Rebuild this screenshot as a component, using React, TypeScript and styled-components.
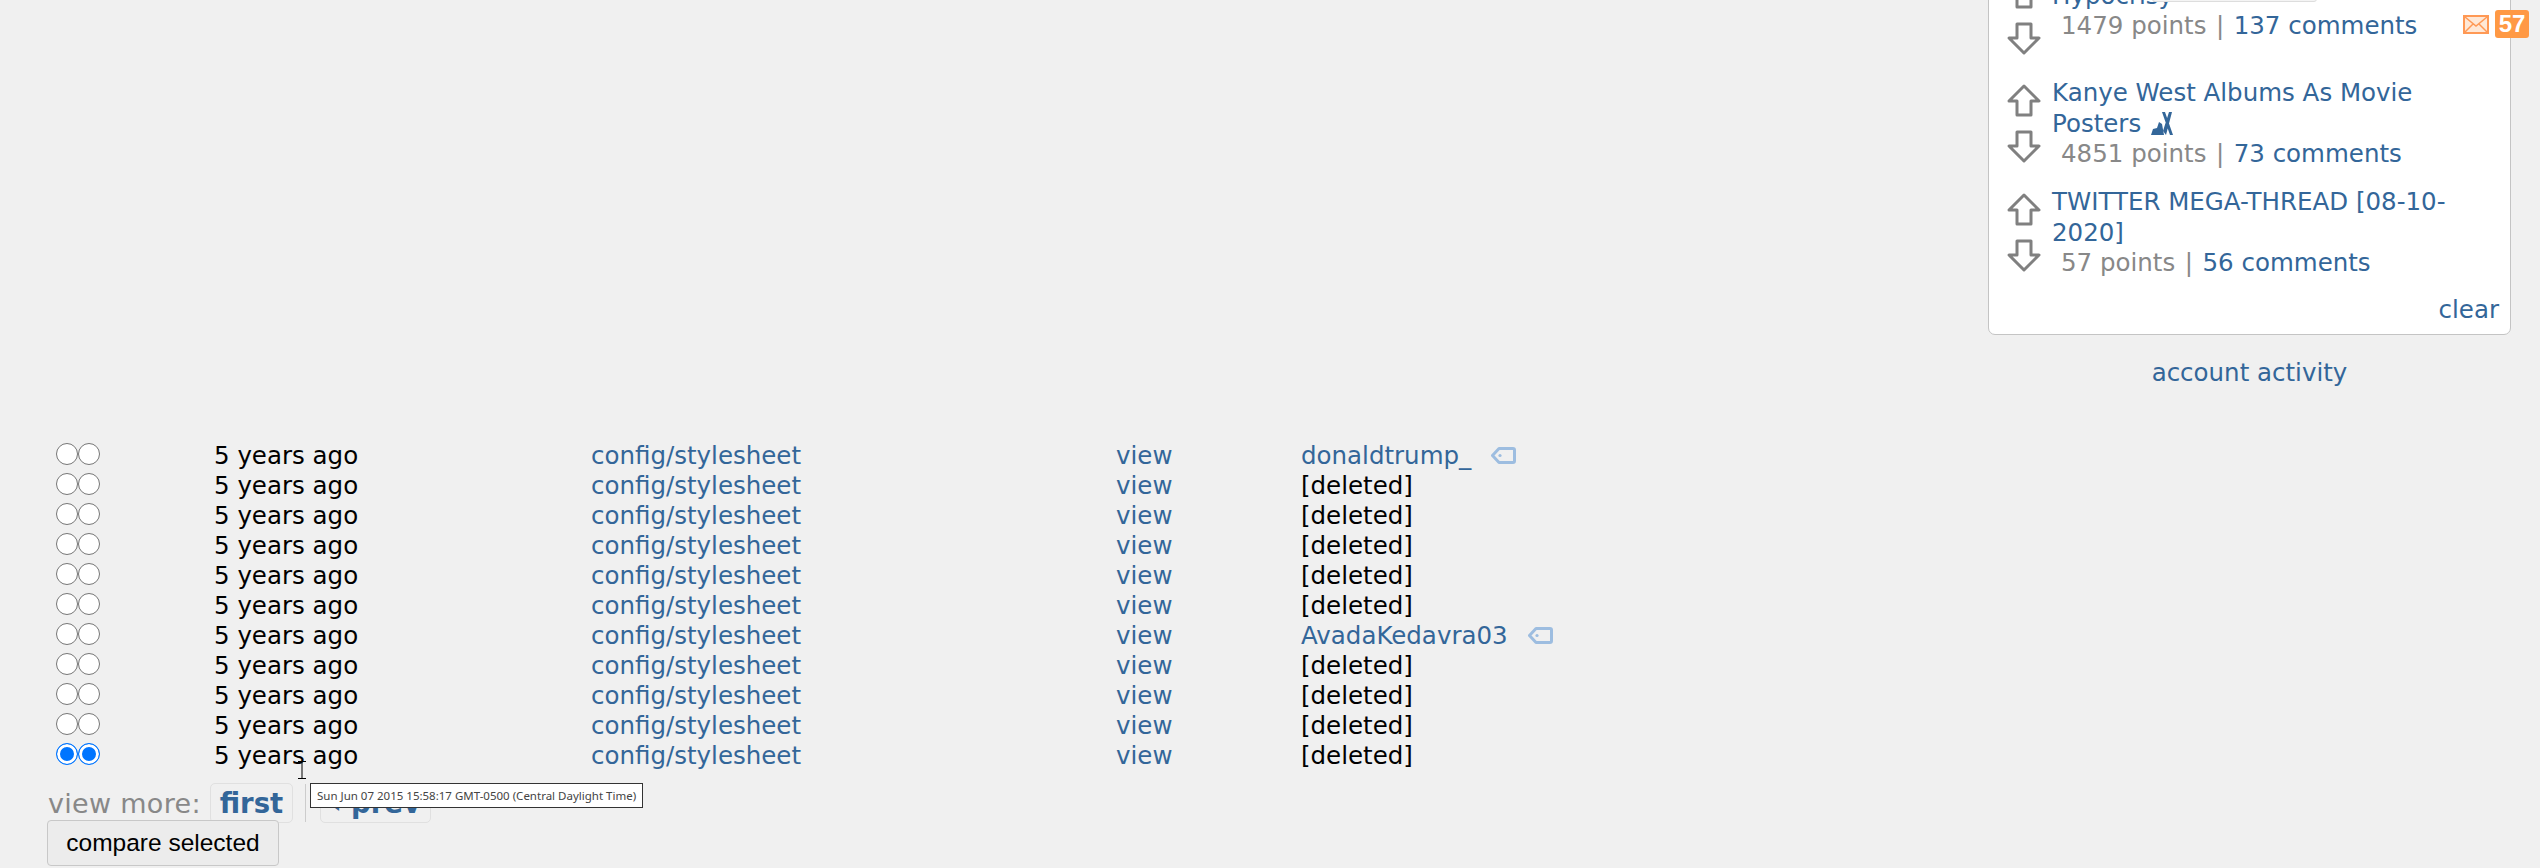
import * as React from 'react'
import styled, { createGlobalStyle } from 'styled-components'

const GlobalStyle = createGlobalStyle`
  html, body {
    margin: 0;
    padding: 0;
    background: #f0f0f0;
  }
  body {
    font-family: 'DejaVu Sans', Verdana, sans-serif;
    color: #000;
  }
`

const Page = styled.div`
  position: relative;
  width: 2540px;
  height: 868px;
  overflow: hidden;
  background: #f0f0f0;
`

const Top = styled.div`
  height: 440px;
  display: flex;
  justify-content: flex-end;
  padding-right: 29px;
  box-sizing: border-box;
`

const Side = styled.aside`
  width: 523px;
  display: flex;
  flex-direction: column;
  align-items: center;
`

const RecentBox = styled.div`
  width: 100%;
  box-sizing: border-box;
  margin-top: -32px;
  padding: 0 11px 0 18px;
  height: 367px;
  background: #fff;
  border: 1px solid #c4c4c4;
  border-radius: 0 0 7px 7px;
  display: flex;
  flex-direction: column;
`

const Item = styled.div<{ $gap: number }>`
  display: flex;
  gap: 11px;
  margin-bottom: ${({ $gap }) => $gap}px;
`

const Arrows = styled.div`
  flex: none;
  width: 34px;
  padding-top: 7px;
  display: flex;
  flex-direction: column;
  gap: 13px;
`

const ItemBody = styled.div<{ $top: number }>`
  flex: 1;
  font-size: 24.5px;
  padding-top: ${({ $top }) => $top}px;
`

const Title = styled.a`
  display: block;
  color: #369;
  line-height: 31px;
`

const Meta = styled.div`
  color: #888;
  line-height: 29px;
  padding-left: 9px;
  white-space: nowrap;
`

const Pipe = styled.span`
  color: #888;
  margin: 0 9.5px;
`

const Link = styled.a`
  color: #369;
  white-space: nowrap;
`

const Clear = styled.a`
  color: #369;
  font-size: 24.5px;
  line-height: 30px;
  margin-top: auto;
  margin-bottom: 9px;
  align-self: flex-end;
`

const Activity = styled.a`
  color: #369;
  font-size: 24.5px;
  margin-top: 23px;
`

const Table = styled.div`
  padding-left: 56px;
  display: flex;
  flex-direction: column;
`

const Row = styled.div`
  height: 30px;
  display: grid;
  grid-template-columns: 158px 377px 525px 185px 1fr;
  align-items: center;
  font-size: 24.5px;
  white-space: nowrap;
`

const Radios = styled.div`
  display: flex;
  margin-bottom: 2px;
`

const Radio = styled.span<{ $on?: boolean }>`
  box-sizing: border-box;
  width: 22px;
  height: 22px;
  border-radius: 50%;
  border: 1.5px solid ${({ $on }) => ($on ? '#0075ff' : '#767676')};
  background: ${({ $on }) => ($on ? '#0075ff' : '#fff')};
  box-shadow: ${({ $on }) => ($on ? 'inset 0 0 0 3px #fff' : 'none')};
`

const Author = styled.span`
  display: flex;
  align-items: center;
  gap: 20px;
`

const Footer = styled.div`
  padding: 13px 0 0 47px;
  display: flex;
  flex-direction: column;
`

const ViewMore = styled.div`
  height: 40px;
  display: flex;
  align-items: center;
  color: #888;
  font-size: 27px;
  letter-spacing: 0.3px;
  padding-left: 1px;
`

const NavButton = styled.a`
  box-sizing: border-box;
  height: 40px;
  display: flex;
  align-items: center;
  padding: 0 9px;
  background: #f0f0f0;
  border: 1px solid #e0e0e0;
  border-radius: 5px;
  color: #369;
  font-weight: bold;
  font-size: 27.5px;
  letter-spacing: 0;
`

const Sep = styled.span`
  width: 1px;
  height: 38px;
  background: #ccc;
  margin: 0 14px 0 12px;
`

const Compare = styled.button`
  box-sizing: border-box;
  width: 232px;
  height: 46px;
  margin-top: -3px;
  background: #ececec;
  border: 1px solid #c8c8c8;
  border-radius: 4px;
  color: #000;
  font-family: 'Liberation Sans', Arial, sans-serif;
  font-size: 24.5px;
  padding: 0;
`

const Tooltip = styled.div`
  position: absolute;
  left: 310px;
  top: 783px;
  height: 25px;
  box-sizing: border-box;
  padding: 0 6px;
  display: flex;
  align-items: center;
  background: #fff;
  border: 1px solid #333;
  font-family: 'Noto Sans', 'Open Sans', sans-serif;
  font-size: 11.5px;
  color: #444;
  white-space: nowrap;
`

const Cursor = styled.svg`
  position: absolute;
  left: 297px;
  top: 761px;
`

const Unread = styled.div`
  position: absolute;
  left: 2463px;
  top: 10px;
  display: flex;
  align-items: center;
  gap: 6px;
`

const Badge = styled.span`
  width: 34px;
  height: 28px;
  border-radius: 3px;
  background: #ff9944;
  color: #fff;
  font-family: 'Liberation Sans', Arial, sans-serif;
  font-weight: bold;
  font-size: 24px;
  display: flex;
  align-items: center;
  justify-content: center;
`

const PopupEdge = styled.div`
  position: absolute;
  left: 2152px;
  top: -10px;
  width: 165px;
  height: 12px;
  box-sizing: border-box;
  background: #f4f4f4;
  border: 1px solid #ddd;
  border-radius: 3px;
`

const FlairIcon = styled.svg`
  vertical-align: -3px;
  margin-left: 9px;
`

const UpArrow = () => (
  <svg width="34" height="33" viewBox="0 0 34 33">
    <path d="M17 2 L32 17 H24 V31 H10 V17 H2 Z" fill="#fff" stroke="#808080" strokeWidth="3" strokeLinejoin="round" />
  </svg>
)

const DownArrow = () => (
  <svg width="34" height="33" viewBox="0 0 34 33">
    <path d="M17 31 L32 16 H24 V2 H10 V16 H2 Z" fill="#fff" stroke="#808080" strokeWidth="3" strokeLinejoin="round" />
  </svg>
)

const TagIcon = () => (
  <svg width="25" height="17" viewBox="0 0 25 17">
    <path d="M8 1.5 H22 Q23.5 1.5 23.5 3 V14 Q23.5 15.5 22 15.5 H8 L1.5 8.5 Z" fill="none" stroke="#9dbde0" strokeWidth="3" strokeLinejoin="round" />
    <circle cx="9" cy="8.5" r="1.6" fill="#9dbde0" />
  </svg>
)

const Flair = () => (
  <FlairIcon width="24" height="24" viewBox="0 0 24 24">
    <path d="M1 24 L3 18 L7 17 L9 11 L12 13 L14 24 Z" fill="#369" />
    <path d="M12 1 L15 1 L23 24 L20 24 Z M19 1 L22 1 L16 24 L13 20 Z" fill="#369" />
  </FlairIcon>
)

const Envelope = () => (
  <svg width="26" height="19" viewBox="0 0 26 19">
    <rect width="26" height="19" fill="#ff9955" />
    <rect x="2" y="2" width="22" height="15" fill="#ffe8d6" />
    <path d="M2 2 L13 11 L24 2 M2 17 L10 9 M24 17 L16 9" fill="none" stroke="#ff9955" strokeWidth="1.5" />
  </svg>
)

const rows = [
  'donaldtrump_',
  '',
  '',
  '',
  '',
  '',
  'AvadaKedavra03',
  '',
  '',
  '',
  ''
]

const recent = [
  { title: 'Hypocrisy', points: 1479, comments: 137, top: 11, gap: 22 },
  { title: 'Kanye West Albums As Movie Posters', points: 4851, comments: 73, flair: true, top: 0, gap: 18 },
  { title: 'TWITTER MEGA-THREAD [08-10-2020]', points: 57, comments: 56, top: 0, gap: 16 }
]

export default function App() {
  return (
    <Page>
      <GlobalStyle />
      <Top>
        <Side>
          <RecentBox>
            {recent.map(r => (
              <Item key={r.title} $gap={r.gap}>
                <Arrows>
                  <UpArrow />
                  <DownArrow />
                </Arrows>
                <ItemBody $top={r.top}>
                  <Title>
                    {r.title}
                    {r.flair && <Flair />}
                  </Title>
                  <Meta>
                    {r.points} points<Pipe>|</Pipe>
                    <Link>{r.comments} comments</Link>
                  </Meta>
                </ItemBody>
              </Item>
            ))}
            <Clear>clear</Clear>
          </RecentBox>
          <Activity>account activity</Activity>
        </Side>
      </Top>
      <Table>
        {rows.map((author, i) => (
          <Row key={i}>
            <Radios>
              <Radio $on={i === rows.length - 1} />
              <Radio $on={i === rows.length - 1} />
            </Radios>
            <span>5 years ago</span>
            <Link>config/stylesheet</Link>
            <Link>view</Link>
            {author ? (
              <Author>
                <Link>{author}</Link>
                <TagIcon />
              </Author>
            ) : (
              <span>[deleted]</span>
            )}
          </Row>
        ))}
      </Table>
      <Footer>
        <ViewMore>
          view more:&nbsp;
          <NavButton>first</NavButton>
          <Sep />
          <NavButton>‹ prev</NavButton>
        </ViewMore>
        <Compare>compare selected</Compare>
      </Footer>
      <PopupEdge />
      <Unread>
        <Envelope />
        <Badge>57</Badge>
      </Unread>
      <Cursor width="10" height="18" viewBox="0 0 10 18">
        <path d="M1 0.5 H9 M5 0.5 V17.5 M1 17.5 H9" fill="none" stroke="#000" strokeWidth="1" />
      </Cursor>
      <Tooltip>Sun Jun 07 2015 15:58:17 GMT-0500 (Central Daylight Time)</Tooltip>
    </Page>
  )
}
